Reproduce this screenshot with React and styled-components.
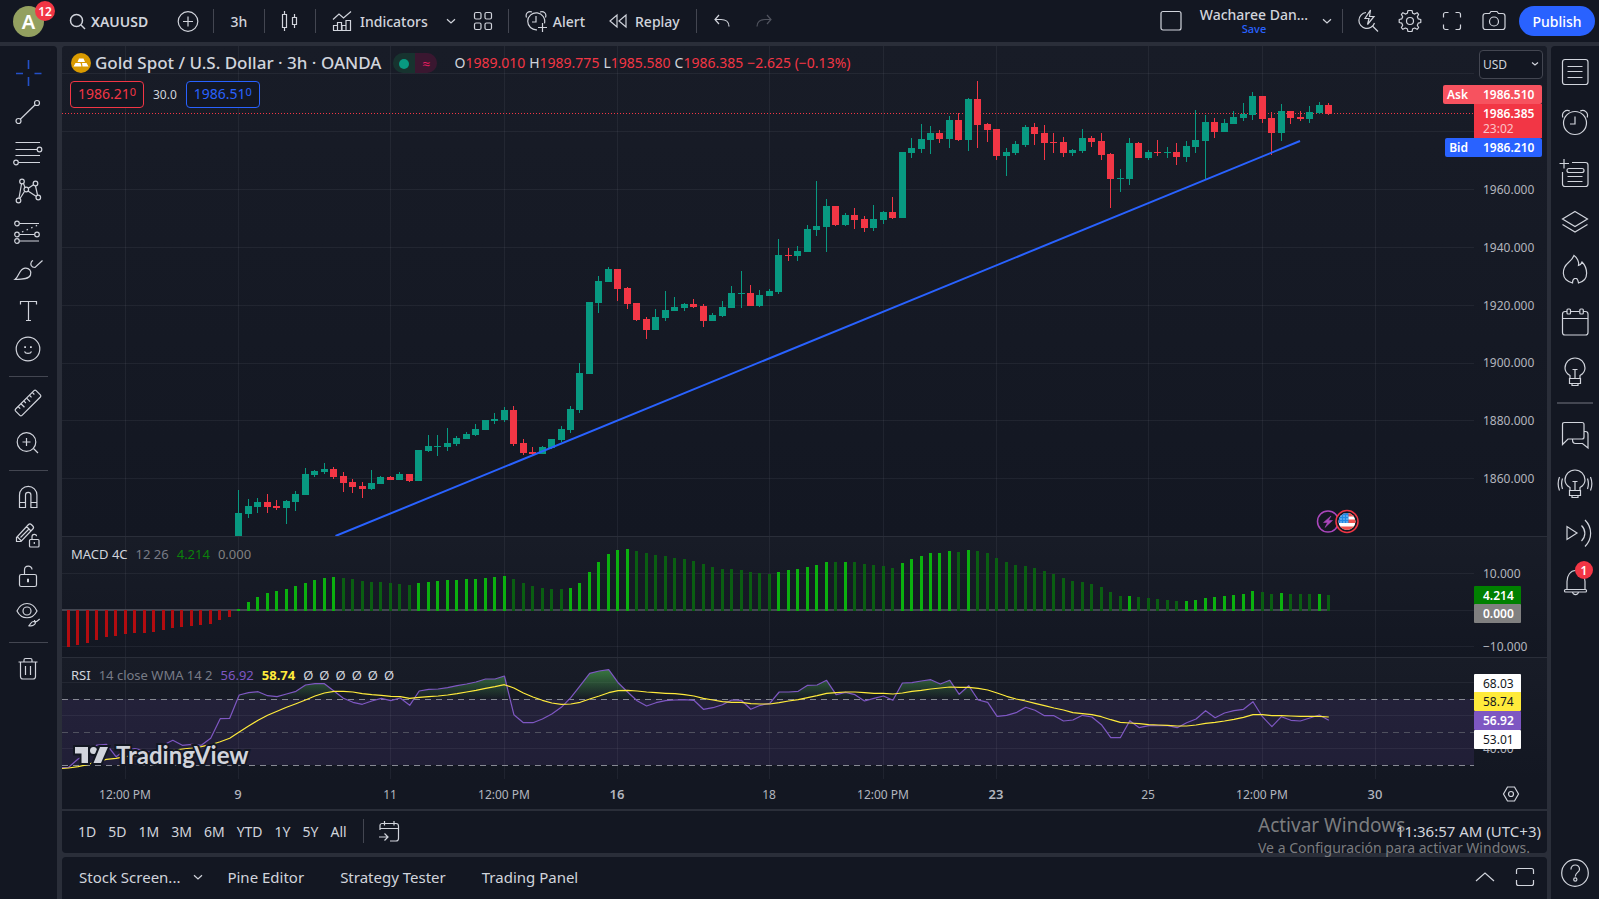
import React from "react";
import styled, { createGlobalStyle } from "styled-components";

const color = {
  panel: "#131722",
  raised: "#181c27",
  border: "#2a2e39",
  divider: "#434651",
  text: "#d1d4dc",
  axis: "#b2b5be",
  muted: "#787b86",
  blue: "#2962ff",
  red: "#f23645",
  green: "#089981",
  purple: "#7e57c2",
  yellow: "#ffeb3b",
};

const GlobalStyle = createGlobalStyle`
  *, *::before, *::after { box-sizing: border-box; }
  body {
    margin: 0;
    background: ${color.border};
    color: ${color.text};
    font-family: "Noto Sans", "Open Sans", sans-serif;
    font-size: 14px;
  }
  button, select { font: inherit; color: inherit; }
`;

/* ---------- shell ---------- */

const Page = styled.div`
  position: relative;
  display: flex;
  flex-direction: column;
  gap: 4px;
  min-height: 100vh;
`;

const Body = styled.div`
  flex: 1;
  display: grid;
  grid-template-columns: 57px minmax(0, 1fr) 48px;
`;

const Center = styled.main`
  display: flex;
  flex-direction: column;
  gap: 4px;
  margin: 0 4px 0 5px;
  min-width: 0;
`;

/* ---------- buttons ---------- */

const BareButton = styled.button`
  display: flex;
  align-items: center;
  justify-content: center;
  padding: 0;
  border: 0;
  background: none;
  color: ${(p) => (p.$dim ? "#50535e" : color.text)};
  cursor: pointer;
`;

const IconButton = styled(BareButton)`
  width: ${(p) => p.$width || 42}px;
  height: 42px;
`;

const TextButton = styled(BareButton)`
  height: 42px;
  padding: 0 12px;
  gap: ${(p) => p.$gap || 8}px;
  white-space: nowrap;
`;

const Badge = styled.span`
  position: absolute;
  display: grid;
  place-items: center;
  min-width: ${(p) => p.$size}px;
  height: ${(p) => p.$size}px;
  top: ${(p) => p.$top}px;
  right: 2px;
  border-radius: 10px;
  background: ${color.red};
  color: #fff;
  font-size: 12px;
  font-weight: 600;
`;

/* ---------- top bar ---------- */

const TopBar = styled.header`
  display: flex;
  align-items: center;
  height: 42px;
  background: ${color.panel};
  font-weight: 500;
`;

const AvatarButton = styled(BareButton)`
  position: relative;
  width: 57px;
  height: 42px;
`;

const Avatar = styled.span`
  display: grid;
  place-items: center;
  width: 31px;
  height: 31px;
  border-radius: 50%;
  background: #93a060;
  color: #fff;
  font-size: 20px;
  font-weight: 600;
`;

const SymbolButton = styled(BareButton)`
  justify-content: flex-start;
  gap: 5px;
  width: 110px;
  height: 42px;
  padding-left: 12px;
  font-weight: 600;
`;

const Separator = styled.span`
  flex: none;
  width: 1px;
  height: 24px;
  margin: 0 4px;
  background: ${color.divider};
`;

const Spacer = styled.span`
  flex: 1;
`;

const LayoutName = styled(BareButton)`
  flex-direction: column;
  width: 124px;
  height: 42px;
  line-height: 16px;
`;

const SaveText = styled.small`
  color: ${color.blue};
  font-size: 11px;
  line-height: 12px;
`;

const PublishButton = styled(BareButton)`
  width: 76px;
  height: 30px;
  margin: 0 4px;
  border-radius: 15px;
  background: ${color.blue};
  color: #fff;
`;

/* ---------- side toolbars ---------- */

const SideBar = styled.nav`
  display: flex;
  flex-direction: column;
  align-items: stretch;
  background: ${color.panel};
  padding: ${(p) => (p.$right ? "1px 0 8px" : "7px 1px 0 0")};
  border-radius: ${(p) => (p.$right ? "4px 0 0 0" : "0 4px 0 0")};
`;

const ToolGroup = styled.div`
  display: grid;
  grid-auto-rows: 1fr;
  justify-items: center;
  height: ${(p) => p.$height}px;
`;

const ToolButton = styled(BareButton)`
  position: relative;
  width: 40px;
`;

const SideRule = styled.hr`
  flex: none;
  width: ${(p) => (p.$right ? 36 : 39)}px;
  height: ${(p) => (p.$right ? 2 : 1)}px;
  margin: ${(p) => (p.$right ? "5px auto 6px" : "7px 9px 6px")};
  border: 0;
  background: ${color.divider};
`;

const BottomSlot = styled.div`
  display: flex;
  justify-content: center;
  margin-top: auto;
`;

/* ---------- chart ---------- */

const ChartPanel = styled.section`
  flex: 1;
  display: flex;
  flex-direction: column;
  overflow: hidden;
  border-radius: 4px;
  background: ${color.panel};
`;

const Pane = styled.div`
  position: relative;
  display: grid;
  grid-template-columns: minmax(0, 1fr) 73px;
  flex: ${(p) => (p.$grow ? "1 0 auto" : "none")};
  height: ${(p) => (p.$grow ? "auto" : `${p.$height}px`)};
  min-height: ${(p) => p.$height}px;
  border-top: ${(p) => (p.$ruled ? `1px solid ${color.border}` : "0")};
  background: ${(p) =>
    p.$flat ? color.panel : `linear-gradient(${color.raised}, ${color.panel})`};
`;

const Plot = styled.svg`
  display: block;
  width: 100%;
  height: 100%;
  overflow: hidden;
`;

const TickText = styled.text`
  fill: ${(p) => p.$ink || color.axis};
  font-size: ${(p) => (p.$large ? 13 : 12)}px;
  font-weight: ${(p) => p.$weight || 400};
  text-anchor: ${(p) => (p.$centered ? "middle" : "start")};
`;

const LogoText = styled.text`
  fill: ${color.text};
  stroke: ${color.panel};
  stroke-width: 4px;
  paint-order: stroke;
  font-family: Lato, sans-serif;
  font-size: 24px;
  font-weight: 700;
`;

const Legend = styled.div`
  position: absolute;
  left: 9px;
  top: 6px;
  display: flex;
  align-items: center;
  gap: 8px;
  height: 22px;
  font-size: 13px;
  line-height: 22px;
  white-space: nowrap;
`;

const SymbolLegend = styled(Legend)`
  gap: 4px;
  font-size: 14px;
`;

const EmptyPlots = styled.span`
  display: flex;
  gap: 6px;
`;

const SymbolTitle = styled.h1`
  margin: 0 8px 0 0;
  font-size: 17px;
  font-weight: 500;
  line-height: 22px;
`;

const StatusPills = styled.span`
  display: grid;
  grid-template-columns: 22px 22px;
  place-items: center;
  width: 44px;
  height: 20px;
  margin-right: 13px;
  border-radius: 10px;
  background: linear-gradient(90deg, #17332f 50%, #3a1730 50%);
  color: #e91e63;
`;

const StatusDot = styled.i`
  width: 10px;
  height: 10px;
  border-radius: 50%;
  background: ${color.green};
`;

const Value = styled.span`
  color: ${(p) => p.$ink};
  font-weight: ${(p) => (p.$bold ? 700 : 400)};
`;

const QuoteRow = styled.div`
  position: absolute;
  left: 8px;
  top: 35px;
  display: flex;
  align-items: center;
  gap: 9px;
  font-size: 12px;
`;

const QuoteButton = styled(BareButton)`
  width: 74px;
  height: 27px;
  padding-bottom: 2px;
  border: 1px solid ${(p) => p.$ink};
  border-radius: 4px;
  background: ${color.panel};
  color: ${(p) => p.$ink};
  font-size: 14px;

  sup {
    font-size: 11px;
    line-height: 1;
    vertical-align: 3px;
  }
`;

const CurrencyBox = styled.label`
  position: absolute;
  top: 4px;
  right: 4px;
  width: 64px;
  height: 29px;
  color: ${color.text};

  svg {
    position: absolute;
    right: 4px;
    top: 10px;
    pointer-events: none;
  }
`;

const CurrencySelect = styled.select`
  width: 100%;
  height: 100%;
  padding: 0 3px;
  border: 1px solid ${color.divider};
  border-radius: 4px;
  background: ${color.panel};
  font-size: 12px;
  appearance: none;
`;

const PriceTags = styled.div`
  position: absolute;
  top: 39px;
  right: 5px;
  display: flex;
  flex-direction: column;
  align-items: flex-end;
  color: #fff;
  font-size: 12px;
  font-weight: 600;
`;

const PriceTag = styled.div`
  display: flex;
  height: 19px;
  line-height: 19px;
  border-radius: 2px;
  background: ${(p) => p.$fill};

  span { padding: 0 6px 0 4px; }
  b { width: 68px; padding-left: 9px; font-weight: 600; }
`;

const LastPriceTag = styled.div`
  width: 68px;
  height: 34px;
  padding: 2px 0 0 9px;
  background: ${color.red};
  line-height: 15px;

  time { display: block; color: #fbc3c8; font-weight: 400; }
`;

const ScaleSettings = styled(BareButton)`
  width: 73px;
`;

/* ---------- bottom rows ---------- */

const RangeBar = styled.div`
  display: flex;
  align-items: center;
  height: 44px;
  padding: 0 0 2px 10px;
  border-top: 2px solid ${color.border};
`;

const RangeButton = styled(BareButton)`
  height: 30px;
  padding: 0 6px;
`;

const RangeList = styled.div`
  display: flex;
  margin-right: 6px;
`;

const Clock = styled(RangeButton)`
  margin-left: auto;
  font-size: 15px;
`;

const BottomBar = styled.footer`
  display: flex;
  align-items: center;
  height: 42px;
  padding: 0 2px 2px 5px;
  border-radius: 4px 4px 0 0;
  background: ${color.panel};
`;

const BottomTab = styled(TextButton)`
  padding: ${(p) => (p.$first ? "0 7px 0 12px" : "0 18px")};
  font-size: 15px;
`;

const ActivationNote = styled.aside`
  position: absolute;
  right: 66px;
  bottom: 41px;
  width: 275px;
  color: rgba(160, 160, 160, 0.75);
  font-size: 14px;
  line-height: 20px;
  white-space: nowrap;
  pointer-events: none;

  strong { display: block; font-size: 19px; font-weight: 400; line-height: 26px; }
`;

/* ---------- icons ---------- */

function Icon({ size = 36, weight = 1.2, stroke = "currentColor", children }) {
  return (
    <svg width={size} height={size} viewBox={`0 0 ${size} ${size}`} fill="none" stroke={stroke}
      strokeWidth={weight} aria-hidden="true">
      {children}
    </svg>
  );
}

const ChevronDown = () => (
  <Icon size={10}><path d="M1 3.2 5 7l4-3.8" /></Icon>
);

const bulb = (
  <>
    <path d="M13 24.5v-3C9.5 19.500 8 17 8 14a10 10 0 0 1 20 0c0 3-1.5 5.500-5 7.500v3z" />
    <path d="M12.5 24.500h11v5h-11zM15 29.500v2h6v-2M15.5 15.500h5M18 15.500v9" />
  </>
);

const icons = {
  cross: <g stroke="#2450c8" strokeWidth="1.6"><path d="M6 18.5h7M24.500 18.5h7M18.5 5v9M18.5 22v9" /></g>,
  trend: <><circle cx="8.5" cy="27" r="2.5" /><circle cx="27" cy="9" r="2.5" /><path d="m10.3 25.2 14.9-14.4" /></>,
  fib: <><path d="M5.5 8.5H30M5.5 15.5H27M5.5 21.5H30M8.5 28.5H30" /><circle cx="29.5" cy="15.5" r="2.3" /><circle cx="6" cy="28.5" r="2.3" /></>,
  pattern: (
    <>
      <path d="m9 25 2.500-14M13.500 10.500l1.500 4M18 15.500l5.500-3.700M25.500 13l2 9M26 23.300l-8-5.300M14.500 18.500l-4.500 7" />
      <circle cx="12" cy="8.5" r="2.3" /><circle cx="25.5" cy="10.5" r="2.3" /><circle cx="16.3" cy="16.5" r="2.3" />
      <circle cx="28.3" cy="24.5" r="2.3" /><circle cx="8.5" cy="27.5" r="2.3" />
    </>
  ),
  forecast: (
    <g transform="translate(0 1)">
      <circle cx="7" cy="9.5" r="2.3" /><circle cx="7" cy="20.5" r="2.3" /><circle cx="27" cy="20.5" r="2.3" /><circle cx="7" cy="27" r="2.3" />
      <path d="M9.5 9.5H29M9.5 20.5h15M9.5 27H29" /><path d="m12 18 16-7" strokeDasharray="1.5 3.5" />
    </g>
  ),
  brush: <><path d="M5 27.500c4.500-3.500 4-10.500 10-11.300 4-.5 7 3 5.500 6.800-1.5 4-7 4.500-15.500 4.500z" /><path d="M21.500 9.500c-1.5 3-.5 5.800 3.500 6l7.500-7M21.500 9.500l1.500-1" /></>,
  text: <path d="M10.5 12.5v-3h16v3M18.5 9.5v19M16 28.5h5" />,
  smile: <><circle cx="18" cy="18" r="11.800" /><path d="M14.500 20.500c1 2.500 6 2.500 7 0" /><path d="M14.200 16.200h1.800M20 16.200h1.800" strokeWidth="1.8" /></>,
  ruler: <g transform="rotate(-45 18 18)"><rect x="3.5" y="13.5" width="29" height="9" rx="1.5" /><path d="M8.5 13.5v3M12.5 13.5v5M16.5 13.5v3M20.5 13.5v5M24.5 13.5v3M28.5 13.5v3" /></g>,
  zoom: <><circle cx="16.5" cy="17" r="9.3" /><path d="m23.500 23.500 4.500 4.500M12.500 17h8M16.500 13v8" /></>,
  magnet: <path d="M9.500 28.500V16a8.700 8.700 0 0 1 17.400 0v12.500h-6V16a2.700 2.700 0 0 0-5.400 0v12.500zM9.500 23.500h6M20.900 23.500h6" />,
  pencilLock: (
    <>
      <path d="M6.500 23.500v-4L18.500 6.500c1-1 2-.8 2.800 0l1.500 1.500c1 1 1 2 0 3L11 23.500zM16.500 8.500l4.500 4.500M7.500 19l4 4M10.500 19.500l8.500-8.500" />
      <rect x="19.5" y="21.5" width="9.5" height="7.5" rx="1" /><path d="M22 21.500v-2.800c0-3 4.500-3 4.500-.5M24.300 24v2" />
    </>
  ),
  lock: <><rect x="9.5" y="16.5" width="17" height="12" rx="1.8" /><path d="M14.500 16.500v-4.500c0-5 7.500-5 7.500-.5" /><path d="M18 20.800v3.500" strokeWidth="2" /></>,
  eye: (
    <>
      <path d="M7 14c4.500-10 15.500-10 20 0-4.500 9-15.500 9-20 0z" /><circle cx="17" cy="14" r="4" />
      <path d="M18.500 29c2.200-1 2-4.500 4.800-4.500 3.500 0 3 4.500-4.800 4.500zM24.500 23c0 1.500 1 2 2.200 1.500l3-2.500" />
    </>
  ),
  trash: <path d="M8.500 11h19M14 11V9c0-1 .5-1.5 1.500-1.500h5c1 0 1.500.5 1.500 1.500v2M10.500 11v14.500c0 1.500 1 2.500 2.500 2.500h10c1.500 0 2.500-1 2.500-2.500V11M15.500 15v9M20.500 15v9" />,
  list: <><rect x="5.5" y="5.5" width="25.5" height="25" rx="2.5" /><path d="M10.500 12.500h15M10.500 17.500h15M10.500 23.500h15" /></>,
  alarm: <><circle cx="18" cy="19" r="11.5" /><path d="M18 12.500v7.500h-5M5.800 13.500c-1.500-5 3-8.500 7-6.500M30.200 13.500c1.500-5-3-8.500-7-6.500" /></>,
  notes: <><path d="M15 8.500h13.500c1.500 0 2.500 1 2.500 2.500v19c0 1.500-1 2.500-2.500 2.500H8c-1.500 0-2.500-1-2.500-2.500V18M2.500 9.500h9.500M7 5v9.500M10.500 22.500h15M10.500 27.500h15" /><rect x="10" y="14.5" width="17" height="4" rx="2" /></>,
  layers: <path d="m18 7.500 12.500 7.500L18 22.500 5.500 15zM5.500 20.500 18 28l12.500-7.500" />,
  flame: <path transform="translate(0 -3)" d="M15.500 32C3 28.500 5 17 11.500 11.500 14.500 9 16 7 17 4.500c3 2 5.500 6.500 4.500 10 2.500-.5 3-2 3.500-3.500 5 5 8.500 18-3.500 21-.5-3-1-4-2-4.500h-2c-1 .5-2 2-2 4.500z" />,
  calendar: <><path d="M10 7.500H8C6.500 7.500 5.500 8.500 5.500 10v18.500C5.500 30 6.500 31 8 31h20.500c1.500 0 2.500-1 2.500-2.500V10c0-1.500-1-2.500-2.500-2.500H26M13.500 7.500h9M5.500 14.500H31" /><rect x="10" y="5" width="3.5" height="5" rx="1" /><rect x="22.8" y="5" width="3.5" height="5" rx="1" /></>,
  bulb,
  chat: <path d="M5.500 27.500V7.500c0-1.500.5-2 2-2H25c1.500 0 2 .5 2 2V20c0 1.500-.5 2-2 2H11zM27 14.500h1.500c1.500 0 2.500 1 2.500 2.500v14L25.500 26.500h-7c-2 0-3-1.500-3-4" />,
  bulbLive: <>{bulb}<path d="M5.500 12.500c-1.200 3.500-1.200 7 0 10.500M2.500 11c-1.800 4.500-1.800 9 0 13.500M30.500 12.500c1.200 3.500 1.200 7 0 10.500M33.500 11c1.800 4.500 1.800 9 0 13.500" /></>,
  stream: <path d="M10 11.500v13L20 18zM24.500 10.500c4.500 4.500 4.500 11 0 15.500M28 5c7.500 7.500 7.500 19 0 26.500" />,
  bell: <g transform="translate(0 -2)"><path d="M10 27.500v-8c0-6 3.500-11 8.500-11S28 13.500 28 19.500v8" /><rect x="7.5" y="27.5" width="22" height="2.5" rx="1" /><path d="M15.500 30c.5 3.500 5.500 3.500 6 0" /></g>,
  help: <><circle cx="18" cy="18" r="13.3" /><path d="M14 14.500c-.5-6 9-6 8.500 0-.3 3-4.200 3-4.200 7" /><circle cx="18.3" cy="24.5" r="1.6" /></>,
};

/* ---------- chart data ---------- */

const barX = (i) => 6.3 + 9.475 * i;
const barPx = (i) => Math.floor(barX(i));

const FIRST_CANDLE = 18;
// high, body top, body bottom, low
const candles = `
G490,513,536,536 G499,506,514,518 G498,502,507,513 R494,502,507,513 R500,506,508,510 G500,501,508,524
G491,494,502,511 G468,474,495,495 G470,471,475,477 G463,469,472,474 R467,469,477,479 R472,476,483,492
R479,482,487,493 R482,486,489,498 G470,483,489,490 G476,477,484,484 R476,477,480,480 G472,474,480,480
R474,474,481,482 G450,450,481,481 G435,446,451,452 G435,446,447,456 G428,443,447,451 G436,438,444,446
G432,434,439,439 G424,429,435,436 G420,420,430,430 G413,419,421,424 G407,410,420,422 R406,410,444,446
R439,443,453,455 R447,452,454,455 G446,447,454,454 G439,439,448,449 G426,429,440,442 G406,409,430,433
G363,373,410,413 G302,302,374,374 G276,281,303,313 G267,269,282,282 R269,269,289,301 R287,288,304,309
R303,303,320,321 R317,319,330,339 G309,317,330,330 G291,310,318,321 G297,307,311,311 G303,304,308,311
R299,304,307,308 R304,306,321,327 G313,315,321,321 G301,307,316,317 G286,293,308,308 G271,293,294,308
R285,293,306,306 G290,295,306,307 G289,291,296,296 G239,255,292,294 R248,255,256,261 G246,251,256,261
G225,229,252,252 G181,226,230,236 G199,206,227,252 R206,206,225,226 G213,215,225,226 R208,215,220,229
R216,219,228,232 G205,219,228,231 G211,212,220,224 R197,212,218,219 G152,152,218,218 G138,148,153,158
G124,139,149,153 G126,133,140,154 R130,133,139,143 G116,120,139,148 R113,120,140,141 G98,99,140,151
R81,99,125,148 R123,124,130,142 R129,129,156,160 G148,152,156,176 G141,144,153,155 G125,127,145,147
R123,127,134,145 R125,133,143,160 R133,142,143,153 R137,142,153,157 G149,150,153,156 G129,138,151,153
R136,138,142,147 R133,141,155,160 R153,154,179,208 G169,178,179,192 G138,143,179,185 R142,143,158,158
G150,152,158,160 R140,152,153,156 G147,152,153,158 R143,152,157,165 G141,146,157,162 G110,140,147,153
G115,122,141,180 R118,122,132,138 G119,123,132,132 G111,117,124,124 G103,114,118,121 G92,96,115,120
R96,96,119,123 R112,118,133,155 G104,111,133,141 R111,111,118,124 R111,117,119,121 G106,112,119,123
G102,105,113,114 R103,105,114,115`
  .trim()
  .split(/\s+/)
  .map((row) => ({ up: row[0] === "G", v: row.slice(1).split(",").map(Number) }));

const macdFalling = [647, 645, 643, 640, 637, 636, 634, 633, 633, 632, 630, 628, 627, 626, 625, 624, 620, 617];
// "+" bars grow, "-" bars shrink
const macdRising = `
+609 +602 +597 +593 +591 +589 +586 +583 +580 +578 +577 -578 -579 -581 -582 -582 -583 -584 -585 +583 +582 +581
+580 +580 +579 +579 +578 +577 +576 -579 -583 -586 -588 -589 -589 +588 +583 +572 +562 +554 +550 +549 -551 -553
-555 -556 -558 -559 -561 -564 -567 -569 -569 -570 -572 -573 -574 +572 +570 +569 +567 +565 +562 -562 +562 -562
-564 -565 -566 -568 +563 +559 +556 +553 +553 +551 -552 +550 -551 -553 -558 -562 -565 -566 -568 -571 -574 -578
-581 -582 -584 -587 -592 -596 +596 -597 -598 -599 -600 -601 +601 +600 +598 +597 +596 +595 +594 +591 -592 -594
+593 -594 -594 -594 +594 -595`
  .trim()
  .split(/\s+/);

// one value per bar, in thirds of a pixel
const rsi = [
  503, 502, 477, 462, 435, 433, 470, 450, 446, 452, 460, 435, 421, 436, 433, 436, 415, 356, 355, 285, 278, 275, 287,
  290, 282, 274, 255, 251, 251, 273, 295, 307, 313, 303, 295, 302, 294, 316, 273, 268, 267, 263, 257, 252, 246, 237,
  237, 228, 344, 368, 368, 357, 342, 322, 293, 257, 220, 213, 209, 248, 276, 302, 318, 308, 302, 300, 299, 301, 328,
  323, 314, 300, 301, 328, 316, 310, 276, 276, 274, 256, 255, 241, 284, 277, 284, 303, 295, 288, 301, 249, 248, 243,
  239, 252, 241, 283, 257, 300, 307, 349, 346, 338, 322, 331, 347, 347, 363, 360, 346, 351, 374, 413, 413, 362, 383,
  377, 377, 377, 383, 368, 357, 332, 353, 339, 332, 328, 305, 350, 380, 350, 361, 363, 354, 345, 361,
];
const rsiAverage = [
  506, 504, 500, 494, 484, 478, 475, 470, 467, 464, 461, 456, 451, 447, 444, 440, 434, 425, 415, 396, 378, 361, 346,
  334, 322, 311, 300, 288, 279, 274, 274, 276, 281, 284, 286, 289, 290, 295, 292, 290, 288, 285, 281, 276, 271, 265,
  260, 254, 264, 279, 291, 301, 309, 313, 312, 307, 297, 288, 278, 272, 271, 273, 276, 278, 280, 281, 284, 288, 295,
  300, 305, 307, 307, 311, 312, 312, 308, 303, 299, 293, 287, 280, 278, 276, 276, 278, 280, 280, 282, 279, 274, 271,
  267, 264, 261, 262, 262, 265, 270, 279, 289, 297, 303, 310, 317, 324, 330, 338, 341, 344, 350, 359, 367, 369, 371,
  374, 375, 376, 378, 378, 375, 370, 367, 363, 358, 352, 344, 344, 347, 347, 348, 349, 349, 349, 351,
];
const rsiPoints = (values) =>
  values.map((v, i) => `${(barX(i - 1) + 0.3).toFixed(1)},${(v / 3 - 58).toFixed(1)}`).join(" ");

const timeTicks = [
  [6, "12:00 PM"], [18, "9", 500], [34, "11"], [46, "12:00 PM"], [58, "16", 600], [74, "18"],
  [86, "12:00 PM"], [98, "23", 600], [114, "25"], [126, "12:00 PM"], [138, "30", 500],
];

function GridLines({ ys }) {
  return (
    <g stroke="rgba(240, 243, 250, 0.06)" shapeRendering="crispEdges">
      {timeTicks.map(([i]) => <line key={i} x1={barPx(i) + 0.5} x2={barPx(i) + 0.5} y1="0" y2="100%" />)}
      {ys.map((y) => <line key={y} x1="0" x2="100%" y1={y + 0.5} y2={y + 0.5} />)}
    </g>
  );
}

function PriceChart() {
  const top = 46;
  return (
    <Plot role="img" aria-label="Gold Spot price chart">
      <GridLines ys={[27, 85, 143, 201, 259, 317, 374, 432]} />
      <line x1="0" x2="100%" y1="67.5" y2="67.5" stroke={color.red} strokeDasharray="1 2" shapeRendering="crispEdges" />
      <g shapeRendering="crispEdges">
        {candles.map(({ up, v }, n) => {
          const x = barPx(n + FIRST_CANDLE);
          return (
            <g key={n} fill={up ? color.green : color.red}>
              <rect x={x} y={v[0] - top} width="1" height={v[3] - v[0]} />
              <rect x={x - 3} y={v[1] - top} width="7" height={v[2] - v[1]} />
            </g>
          );
        })}
      </g>
      <line x1="273.5" y1="490" x2="1238" y2="95" stroke={color.blue} strokeWidth="2" />
      <g transform={`translate(${barPx(133)} 475.5)`} fill={color.panel} strokeWidth="1.5">
        <circle r="10.5" stroke="#ab47bc" />
        <path d="M3-5.500-4.500 1h4L-3 6 4.500-1h-4z" fill="#ab47bc" stroke="#ab47bc" strokeWidth="0.5" />
        <circle cx="19" r="11" stroke={color.red} />
        <clipPath id="flag"><circle cx="19" r="8.5" /></clipPath>
        <g clipPath="url(#flag)">
          <rect x="10" y="-9" width="18" height="18" fill="#fff" />
          <path d="M10-8.500h18v3.500H10zM10-2h18v3.500H10zM10 5h18v4H10z" fill="#ef5350" />
          <rect x="10" y="-9" width="10.5" height="10.5" fill="#1e88e5" />
          <path d="M12.500-5.500h7M12.500-2.500h7M12.500.5h7" stroke="#fff" strokeWidth="1" strokeDasharray="1 2" />
        </g>
      </g>
    </Plot>
  );
}

function MacdChart() {
  const top = 537;
  const zero = 73;
  return (
    <Plot role="img" aria-label="MACD histogram">
      <GridLines ys={[36, 73, 109]} />
      <rect x="0" y={zero - 1} width={barPx(133) + 1} height="2" fill="#434651" />
      <g shapeRendering="crispEdges">
        {macdFalling.map((end, i) => (
          <rect key={i} x={barPx(i) - 1} y={zero} width="3" height={end - top - zero} fill="#b30c10" />
        ))}
        {macdRising.map((bar, n) => {
          const y = Number(bar.slice(1)) - top;
          return (
            <rect key={n} x={barPx(n + FIRST_CANDLE) - 1} y={y} width="3" height={zero + 1 - y}
              fill={bar[0] === "+" ? "#0bb00f" : "#0a5e12"} />
          );
        })}
      </g>
    </Plot>
  );
}

function RsiChart() {
  return (
    <Plot role="img" aria-label="RSI oscillator">
      <defs>
        <linearGradient id="overbought" x1="0" x2="0" y1="8" y2="41" gradientUnits="userSpaceOnUse">
          <stop offset="0" stopColor="#4caf50" stopOpacity="0.7" />
          <stop offset="1" stopColor="#4caf50" stopOpacity="0" />
        </linearGradient>
        <clipPath id="above70"><rect width="100%" height="41" /></clipPath>
      </defs>
      <rect y="41" width="100%" height="66" fill={color.purple} fillOpacity="0.13" />
      <GridLines ys={[24, 57, 90]} />
      <polygon clipPath="url(#above70)" fill="url(#overbought)"
        points={`0,41 ${rsiPoints(rsi)} ${barX(133).toFixed(1)},41`} />
      <g strokeDasharray="6 5" shapeRendering="crispEdges">
        <line x1="0" x2="100%" y1="41.5" y2="41.5" stroke="#868993" />
        <line x1="0" x2="100%" y1="74.5" y2="74.5" stroke="#50515f" />
        <line x1="0" x2="100%" y1="107.5" y2="107.5" stroke="#868993" />
      </g>
      <g fill="none" strokeWidth="1.2" strokeLinejoin="round">
        <polyline points={rsiPoints(rsi)} stroke={color.purple} />
        <polyline points={rsiPoints(rsiAverage)} stroke={color.yellow} />
      </g>
      <g transform="translate(13 89)" fill={color.text} stroke={color.panel} strokeWidth="4" paintOrder="stroke">
        <path d="M0 0h13v16H6.500V6.500H0z" />
        <circle cx="18.5" cy="3.5" r="3.5" />
        <path d="M25 0h8l-7 16h-7.500z" />
      </g>
      <LogoText x="54" y="106">TradingView</LogoText>
    </Plot>
  );
}

function AxisTag({ y, fill, ink, bold, children }) {
  return (
    <g>
      <rect x="0" y={y} width="47" height="19" rx="1" fill={fill} />
      <TickText x="9" y={y + 14} $ink={ink} $weight={bold ? 600 : 400}>{children}</TickText>
    </g>
  );
}

function TimeAxis() {
  return (
    <Plot role="img" aria-label="Time scale">
      {timeTicks.map(([i, label, weight]) => (
        <TickText key={i} x={barPx(i)} y="20" $centered $large={Boolean(weight)} $weight={weight}>
          {label}
        </TickText>
      ))}
    </Plot>
  );
}

/* ---------- sections ---------- */

function Header() {
  return (
    <TopBar>
      <AvatarButton aria-label="Account menu">
        <Avatar>A</Avatar>
        <Badge $size={20} $top={1}>12</Badge>
      </AvatarButton>
      <SymbolButton aria-label="Symbol search">
        <Icon size={17} weight={1.5}><circle cx="7.5" cy="7.5" r="6" /><path d="m12 12 4 4" /></Icon>
        XAUUSD
      </SymbolButton>
      <IconButton aria-label="Compare symbols">
        <Icon size={22}><circle cx="11" cy="11.5" r="9.8" /><path d="M6 11.500h10M11 6.500v10" /></Icon>
      </IconButton>
      <Separator />
      <IconButton>3h</IconButton>
      <Separator />
      <IconButton aria-label="Chart type">
        <Icon size={22}><path d="M3.500 4.500h4v13h-4zM5.500 1v3.500M5.500 17.500V21M13.500 7.500h4v7h-4zM15.500 4v3.500M15.500 14.500V18" /></Icon>
      </IconButton>
      <Separator />
      <TextButton>
        <Icon size={20}><path d="M1 8.500 7 3l4.500 4L19 .5M1.500 19.500v-5h4v5M5.500 19.500v-8h4v8M10 19.500v-5h4v5M14 19.500V9.500h4.500v10zM1 19.500h18" /></Icon>
        Indicators
      </TextButton>
      <IconButton $width={22} aria-label="Favorite indicators"><ChevronDown /></IconButton>
      <IconButton aria-label="Indicator templates">
        <Icon size={20}><rect x="1.5" y="1.5" width="6.5" height="6.5" rx="1.5" /><rect x="12" y="1.5" width="6.5" height="6.5" rx="1.5" /><rect x="1.5" y="12" width="6.5" height="6.5" rx="1.5" /><rect x="12" y="12" width="6.5" height="6.5" rx="1.5" /></Icon>
      </IconButton>
      <Separator />
      <TextButton $gap={6}>
        <Icon size={22}><path d="M12 19.800a8.500 8.500 0 1 1 7.500-6.500M11 6v6H7M1.500 7.500C0 3.500 3.500.5 7 2M20.500 7.500C22 3.500 18.500.5 15 2M17.500 13v9M13 17.500h9" /></Icon>
        Alert
      </TextButton>
      <TextButton>
        <Icon size={18}><path d="M8 3v12L1 9zM17 3v12l-7-6z" /></Icon>
        Replay
      </TextButton>
      <Separator />
      <IconButton aria-label="Undo">
        <Icon size={18}><path d="M6 3 2 7.500 6 12M2 7.500h6c4.500 0 8 2.500 8 7" /></Icon>
      </IconButton>
      <IconButton $dim aria-label="Redo">
        <Icon size={18}><path d="m12 3 4 4.500-4 4.500M16 7.500h-6c-4.500 0-8 2.500-8 7" /></Icon>
      </IconButton>
      <Spacer />
      <IconButton aria-label="Layout setup">
        <Icon size={22}><rect x="1" y="1.5" width="20" height="18.5" rx="2" /></Icon>
      </IconButton>
      <LayoutName>
        Wacharee Dan...
        <SaveText>Save</SaveText>
      </LayoutName>
      <IconButton $width={22} aria-label="Manage layouts"><ChevronDown /></IconButton>
      <Separator />
      <IconButton aria-label="Quick search">
        <Icon size={24}><path d="M10 3.500A8 8 0 1 0 18.500 14M17 17.500l5 5M14.500 1 9 9.500h4l-1.500 6L18 7.500h-4.500z" /></Icon>
      </IconButton>
      <IconButton aria-label="Settings">
        <Icon size={24}>
          <path d="m10 1.500-.7 2.800-2 .8L4.900 3.700 3.400 5.400l1.300 2.300-.9 2.100-2.600.7v3l2.600.7.9 2.100-1.300 2.300 1.500 1.700 2.400-1.300 2 .8.7 2.700h4l.7-2.700 2-.8 2.400 1.300 1.500-1.700-1.300-2.300.9-2.100 2.600-.7v-3l-2.600-.7-.9-2.100 1.300-2.300-1.500-1.700-2.400 1.400-2-.8-.7-2.800z" strokeLinejoin="round" />
          <circle cx="12" cy="12" r="3.5" />
        </Icon>
      </IconButton>
      <IconButton aria-label="Fullscreen">
        <Icon size={20}><path d="M1.500 6.500v-3c0-1 1-2 2-2h3M13.500 1.500h3c1 0 2 1 2 2v3M18.500 13.500v3c0 1-1 2-2 2h-3M6.500 18.500h-3c-1 0-2-1-2-2v-3" /></Icon>
      </IconButton>
      <IconButton aria-label="Take a snapshot">
        <Icon size={24}><path d="M7.500 4.500 9 2.500h6l1.500 2h4c1.500 0 2.500 1 2.500 2.500v11c0 1.500-1 2.500-2.500 2.500h-17C2 20.500 1 19.500 1 18V7c0-1.500 1-2.500 2.500-2.500z" /><circle cx="12" cy="12.5" r="4.5" /></Icon>
      </IconButton>
      <PublishButton>Publish</PublishButton>
    </TopBar>
  );
}

const leftGroups = [
  { height: 316, tools: [["cross", "Cross"], ["trend", "Trend line"], ["fib", "Fib retracement"], ["pattern", "Patterns"], ["forecast", "Forecasting"], ["brush", "Brush"], ["text", "Text"], ["smile", "Icons"]] },
  { height: 80, tools: [["ruler", "Measure"], ["zoom", "Zoom in"]] },
  { height: 158, tools: [["magnet", "Magnet mode"], ["pencilLock", "Stay in drawing mode"], ["lock", "Lock drawings"], ["eye", "Hide drawings"]] },
  { height: 40, tools: [["trash", "Remove objects"]] },
];

const rightGroups = [
  { height: 350, tools: [["list", "Watchlist"], ["alarm", "Alerts"], ["notes", "News"], ["layers", "Object tree"], ["flame", "Hotlists"], ["calendar", "Calendar"], ["bulb", "Ideas"]] },
  { height: 196, tools: [["chat", "Chats"], ["bulbLive", "Ideas stream"], ["stream", "Streams"], ["bell", "Notifications", 1]] },
];

function Tools({ groups, right }) {
  return groups.map((group, n) => (
    <React.Fragment key={n}>
      {n > 0 && <SideRule $right={right} />}
      <ToolGroup $height={group.height}>
        {group.tools.map(([name, label, count]) => (
          <ToolButton key={name} aria-label={label}>
            <Icon>{icons[name]}</Icon>
            {count && <Badge $size={18} $top={4}>{count}</Badge>}
          </ToolButton>
        ))}
      </ToolGroup>
    </React.Fragment>
  ));
}

const ohlc = [["O", "1989.010"], ["H", "1989.775"], ["L", "1985.580"], ["C", "1986.385"]];

function MainPane() {
  return (
    <Pane $grow $height={490}>
      <PriceChart />
      <Plot role="img" aria-label="Price scale">
        {[1960, 1940, 1920, 1900, 1880, 1860].map((price, n) => (
          <TickText key={price} x="9" y={148 + Math.round(n * 57.8)}>{price}.000</TickText>
        ))}
      </Plot>
      <SymbolLegend>
        <Icon size={20} stroke="none">
          <circle cx="10" cy="10" r="10" fill="#d99a00" />
          <path d="M8 5.500h4.500l1.500 3.500H6.500zM4.500 10h5l1 3.500h-8zM11 10h4.500l2 3.500h-6z" fill="#fff" />
        </Icon>
        <SymbolTitle>Gold Spot / U.S. Dollar · 3h · OANDA</SymbolTitle>
        <StatusPills><StatusDot />≈</StatusPills>
        {ohlc.map(([k, v]) => (
          <span key={k}>{k}<Value $ink={color.red}>{v}</Value></span>
        ))}
        <Value $ink={color.red}>−2.625 (−0.13%)</Value>
      </SymbolLegend>
      <QuoteRow>
        <QuoteButton $ink={color.red}><span>1986.21<sup>0</sup></span></QuoteButton>
        <span>30.0</span>
        <QuoteButton $ink={color.blue}><span>1986.51<sup>0</sup></span></QuoteButton>
      </QuoteRow>
      <CurrencyBox>
        <CurrencySelect aria-label="Currency" defaultValue="USD">
          <option>USD</option>
        </CurrencySelect>
        <Icon size={8}><path d="m1 2.500 3 2.500 3-2.500" /></Icon>
      </CurrencyBox>
      <PriceTags>
        <PriceTag $fill="#f7525f"><span>Ask</span><b>1986.510</b></PriceTag>
        <LastPriceTag>1986.385<time>23:02</time></LastPriceTag>
        <PriceTag $fill={color.blue}><span>Bid</span><b>1986.210</b></PriceTag>
      </PriceTags>
    </Pane>
  );
}

function MacdPane() {
  return (
    <Pane $ruled $height={121}>
      <MacdChart />
      <Plot role="img" aria-label="MACD scale">
        <TickText x="9" y="41">10.000</TickText>
        <TickText x="9" y="114">−10.000</TickText>
        <AxisTag y={49} fill="#008000" ink="#fff" bold>4.214</AxisTag>
        <AxisTag y={67} fill="#808080" ink="#fff" bold>0.000</AxisTag>
      </Plot>
      <Legend>
        <span>MACD 4C</span>
        <Value $ink={color.muted}>12 26</Value>
        <Value $ink="#0b800b">4.214</Value>
        <Value $ink="#808080">0.000</Value>
      </Legend>
    </Pane>
  );
}

function RsiPane() {
  return (
    <Pane $ruled $height={122}>
      <RsiChart />
      <Plot role="img" aria-label="RSI scale">
        <TickText x="9" y="95">40.00</TickText>
        <AxisTag y={16} fill="#fff" ink="#131722">68.03</AxisTag>
        <AxisTag y={72} fill="#fff" ink="#131722">53.01</AxisTag>
        <AxisTag y={34} fill={color.yellow} ink="#131722">58.74</AxisTag>
        <AxisTag y={53} fill={color.purple} ink="#fff" bold>56.92</AxisTag>
      </Plot>
      <Legend>
        <span>RSI</span>
        <Value $ink={color.muted}>14 close WMA 14 2</Value>
        <Value $ink={color.purple}>56.92</Value>
        <Value $ink={color.yellow} $bold>58.74</Value>
        <EmptyPlots>
          {[1, 2, 3, 4, 5, 6].map((n) => <span key={n}>Ø</span>)}
        </EmptyPlots>
      </Legend>
    </Pane>
  );
}

const ranges = ["1D", "5D", "1M", "3M", "6M", "YTD", "1Y", "5Y", "All"];

export default function App() {
  return (
    <>
      <GlobalStyle />
      <Page>
        <Header />
        <Body>
          <SideBar aria-label="Drawing tools">
            <Tools groups={leftGroups} />
          </SideBar>
          <Center>
            <ChartPanel>
              <MainPane />
              <MacdPane />
              <RsiPane />
              <Pane $flat $height={30}>
                <TimeAxis />
                <ScaleSettings aria-label="Scale settings">
                  <Icon size={18}><path d="M5.500 2h7l4 7-4 7h-7l-4-7z" /><circle cx="9" cy="9" r="2.5" /></Icon>
                </ScaleSettings>
              </Pane>
              <RangeBar>
                <RangeList>
                  {ranges.map((r) => <RangeButton key={r}>{r}</RangeButton>)}
                </RangeList>
                <Separator />
                <IconButton aria-label="Go to date">
                  <Icon size={22}><path d="M2 10V5.500C2 4.500 3 3.500 4 3.500h14c1.500 0 2.500 1 2.500 2.500v12.500c0 1.500-1 2.500-2.500 2.500h-6M2 8.500h18.500M6.500 1v4.500M16 1v4.500M1 17h8.500M6.500 13.500 10 17l-3.500 3.500" /></Icon>
                </IconButton>
                <Clock>11:36:57 AM (UTC+3)</Clock>
              </RangeBar>
            </ChartPanel>
            <BottomBar>
              <BottomTab $first>Stock Screen...</BottomTab>
              <IconButton $width={22} aria-label="Screener menu"><ChevronDown /></IconButton>
              <BottomTab>Pine Editor</BottomTab>
              <BottomTab>Strategy Tester</BottomTab>
              <BottomTab>Trading Panel</BottomTab>
              <Spacer />
              <IconButton $width={40} aria-label="Open panel"><Icon size={20}><path d="m1 14 9-8 9 8" /></Icon></IconButton>
              <IconButton $width={40} aria-label="Maximize panel">
                <Icon size={20}><path d="M1.500 7V3.500c0-1 1-2 2-2h13c1 0 2 1 2 2V7M1.500 13v3.500c0 1 1 2 2 2h13c1 0 2-1 2-2V13" /></Icon>
              </IconButton>
            </BottomBar>
          </Center>
          <SideBar $right aria-label="Widgets">
            <Tools groups={rightGroups} right />
            <BottomSlot>
              <ToolButton aria-label="Help center"><Icon>{icons.help}</Icon></ToolButton>
            </BottomSlot>
          </SideBar>
        </Body>
        <ActivationNote>
          <strong>Activar Windows</strong>
          Ve a Configuración para activar Windows.
        </ActivationNote>
      </Page>
    </>
  );
}
